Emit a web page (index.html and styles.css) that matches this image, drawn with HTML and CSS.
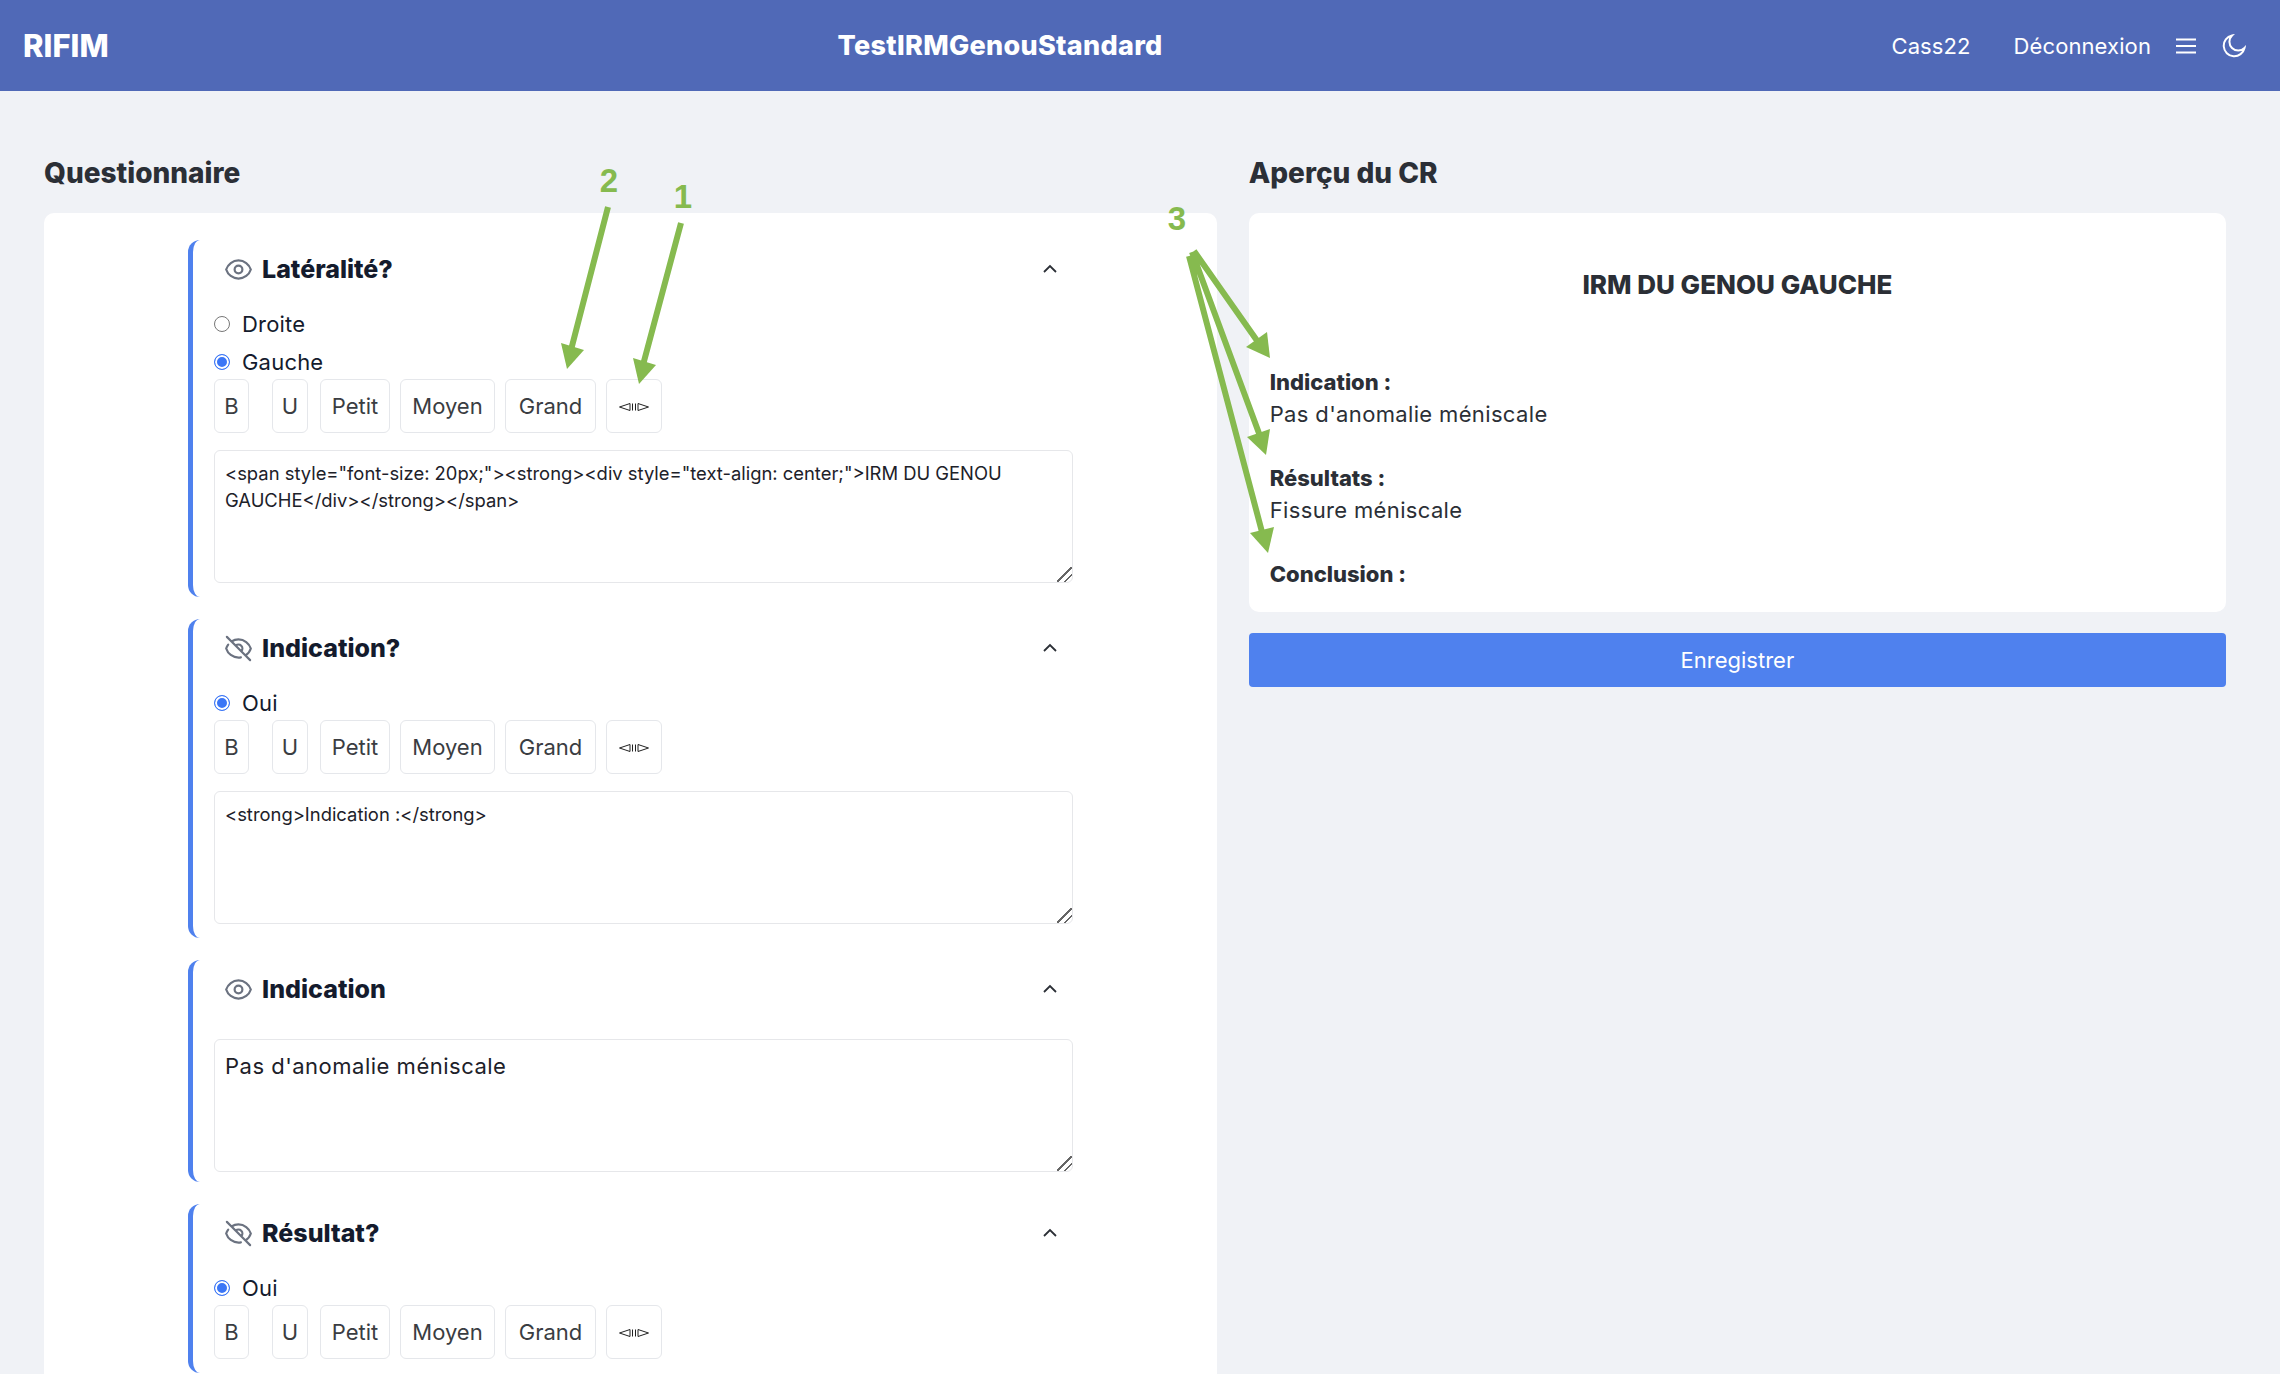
FILE: index.html
```html
<!DOCTYPE html>
<html lang="fr">
<head>
    <meta charset="UTF-8">
    <meta name="viewport" content="width=device-width, initial-scale=1.0">
    <title>TestIRMGenouStandard</title>
    <link rel="stylesheet" href="styles.css">
</head>
<body>
    <svg width="0" height="0" class="defs">
        <symbol id="eye" viewBox="0 0 24 24">
            <path d="M15 12a3 3 0 11-6 0 3 3 0 016 0z"/>
            <path d="M2.458 12C3.732 7.943 7.523 5 12 5c4.478 0 8.268 2.943 9.542 7-1.274 4.057-5.064 7-9.542 7-4.477 0-8.268-2.943-9.542-7z"/>
        </symbol>
        <symbol id="eye-off" viewBox="0 0 24 24">
            <path d="M13.875 18.825A10.05 10.05 0 0112 19c-4.478 0-8.268-2.943-9.543-7a9.97 9.97 0 011.563-3.029m5.858.908a3 3 0 114.243 4.243M9.878 9.878l4.242 4.242M9.88 9.88l-3.29-3.29m7.532 7.532l3.29 3.29M3 3l3.59 3.59m0 0A9.953 9.953 0 0112 5c4.478 0 8.268 2.943 9.543 7a10.025 10.025 0 01-4.132 5.411m0 0L21 21"/>
        </symbol>
        <symbol id="chevron" viewBox="0 0 16 10">
            <path d="M2 8l6-6 6 6"/>
        </symbol>
        <symbol id="align" viewBox="0 0 30 8">
            <path d="M0.5 4L11 0.5v7z"/>
            <path d="M13.5 0.5v7M16.5 0.5v7"/>
            <path d="M29.5 4L19 0.5v7z"/>
        </symbol>
    </svg>

    <header class="topbar">
        <div class="brand">RIFIM</div>
        <div class="page-name">TestIRMGenouStandard</div>
        <nav class="topnav">
            <a class="nav-user">Cass22</a>
            <a class="nav-logout">Déconnexion</a>
            <svg class="nav-icon nav-menu" viewBox="0 0 20 16"><path d="M0 1.5h20M0 8h20M0 14.5h20"/></svg>
            <svg class="nav-icon nav-moon" viewBox="0 0 24 24"><path d="M10 1.5A10.5 10.5 0 1 0 22.5 14 8.6 8.6 0 0 1 10 1.5z"/></svg>
        </nav>
    </header>

    <main class="layout">
        <section>
            <h2 class="section-title">Questionnaire</h2>
            <div class="card form-card">

                <div class="block">
                    <div class="block-head">
                        <svg class="eye"><use href="#eye"/></svg>
                        <h3>Latéralité?</h3>
                        <svg class="chevron"><use href="#chevron"/></svg>
                    </div>
                    <div class="radios">
                        <label class="radio"><input type="radio" name="lat">Droite</label>
                        <label class="radio"><input type="radio" name="lat" checked>Gauche</label>
                    </div>
                    <div class="toolbar">
                        <button class="tool tool-b">B</button>
                        <button class="tool tool-u">U</button>
                        <button class="tool tool-petit">Petit</button>
                        <button class="tool tool-moyen">Moyen</button>
                        <button class="tool tool-grand">Grand</button>
                        <button class="tool tool-align"><svg class="align"><use href="#align"/></svg></button>
                    </div>
                    <textarea class="code">&lt;span style="font-size: 20px;"&gt;&lt;strong&gt;&lt;div style="text-align: center;"&gt;IRM DU GENOU GAUCHE&lt;/div&gt;&lt;/strong&gt;&lt;/span&gt;</textarea>
                </div>

                <div class="block">
                    <div class="block-head">
                        <svg class="eye"><use href="#eye-off"/></svg>
                        <h3>Indication?</h3>
                        <svg class="chevron"><use href="#chevron"/></svg>
                    </div>
                    <div class="radios">
                        <label class="radio"><input type="radio" name="ind" checked>Oui</label>
                    </div>
                    <div class="toolbar">
                        <button class="tool tool-b">B</button>
                        <button class="tool tool-u">U</button>
                        <button class="tool tool-petit">Petit</button>
                        <button class="tool tool-moyen">Moyen</button>
                        <button class="tool tool-grand">Grand</button>
                        <button class="tool tool-align"><svg class="align"><use href="#align"/></svg></button>
                    </div>
                    <textarea class="code">&lt;strong&gt;Indication :&lt;/strong&gt;</textarea>
                </div>

                <div class="block block-text">
                    <div class="block-head">
                        <svg class="eye"><use href="#eye"/></svg>
                        <h3>Indication</h3>
                        <svg class="chevron"><use href="#chevron"/></svg>
                    </div>
                    <textarea class="answer">Pas d'anomalie méniscale</textarea>
                </div>

                <div class="block">
                    <div class="block-head">
                        <svg class="eye"><use href="#eye-off"/></svg>
                        <h3>Résultat?</h3>
                        <svg class="chevron"><use href="#chevron"/></svg>
                    </div>
                    <div class="radios">
                        <label class="radio"><input type="radio" name="res" checked>Oui</label>
                    </div>
                    <div class="toolbar">
                        <button class="tool tool-b">B</button>
                        <button class="tool tool-u">U</button>
                        <button class="tool tool-petit">Petit</button>
                        <button class="tool tool-moyen">Moyen</button>
                        <button class="tool tool-grand">Grand</button>
                        <button class="tool tool-align"><svg class="align"><use href="#align"/></svg></button>
                    </div>
                </div>

            </div>
        </section>

        <section>
            <h2 class="section-title">Aperçu du CR</h2>
            <div class="card preview-card">
                <h3 class="preview-title">IRM DU GENOU GAUCHE</h3>
                <p class="preview-item"><strong>Indication :</strong><br>Pas d'anomalie méniscale</p>
                <p class="preview-item"><strong>Résultats :</strong><br>Fissure méniscale</p>
                <p class="preview-item"><strong>Conclusion :</strong></p>
            </div>
            <button class="save">Enregistrer</button>
        </section>
    </main>

    <!-- green annotations drawn over the screenshot -->
    <svg class="notes" viewBox="0 0 2280 1374">
        <text x="609" y="192">2</text>
        <text x="683" y="208">1</text>
        <text x="1177" y="230">3</text>
        <path class="note-line" d="M608 207L571 350M681 223L643 365M1194 251L1258 342M1192 252L1260 436M1189 256L1262 532"/>
        <path class="note-head" d="M567 369L561 343L584 350z"/>
        <path class="note-head" d="M639 384L633 358L656 365z"/>
        <path class="note-head" d="M1270 358L1246 347L1267 332z"/>
        <path class="note-head" d="M1266 455L1247 437L1270 429z"/>
        <path class="note-head" d="M1268 553L1250 533L1274 527z"/>
    </svg>
</body>
</html>
```

FILE: styles.css
```css
* {
    box-sizing: border-box;
}
html, body {
    height: 1374px;
    overflow: hidden;
}
body {
    position: relative;
    margin: 0;
    font-family: Inter, "Noto Sans", sans-serif;
    font-size: 22px;
    background-color: #f0f2f6;
    color: #2b2f36;
}
.defs {
    position: absolute;
}

/* top bar */
.topbar {
    display: flex;
    align-items: center;
    justify-content: space-between;
    height: 91px;
    padding: 0 34px 0 23px;
    background-color: #5069b7;
    color: #fff;
}
.brand {
    font-size: 31px;
    font-weight: 800;
}
.page-name {
    font-size: 27px;
    font-weight: 800;
    letter-spacing: 0.3px;
}
.topnav {
    display: flex;
    align-items: center;
}
.nav-user, .nav-logout {
    font-size: 22px;
    letter-spacing: 0.1px;
}
.nav-logout {
    margin-left: 43px;
}
.nav-icon {
    fill: none;
    stroke: #fff;
    stroke-width: 2;
}
.nav-menu {
    width: 20px;
    height: 16px;
    margin-left: 25px;
}
.nav-moon {
    width: 24px;
    height: 24px;
    margin-left: 26px;
}

/* two columns */
.layout {
    display: grid;
    grid-template-columns: 6fr 5fr;
    gap: 32px;
    padding: 62px 54px 0 44px;
}
.section-title {
    margin: 0 0 20px;
    font-size: 28px;
    line-height: 40px;
    font-weight: 800;
}
.card {
    background-color: #fff;
    border-radius: 10px;
}
.form-card {
    height: 1400px;
    padding: 27px 0 0 144px;
}

/* question blocks */
.block {
    width: 898px;
    margin-bottom: 22px;
    padding: 0 13px 14px 21px;
    background-color: #fff;
    border-left: 5px solid #4f81ee;
    border-radius: 12px;
}
.block-text {
    padding-bottom: 10px;
}
.block-head {
    display: flex;
    align-items: center;
    height: 58px;
    padding-left: 9px;
}
.block-head h3 {
    flex: 1;
    margin: 0 0 0 8px;
    font-size: 25px;
    font-weight: 800;
    color: #141b2d;
}
.eye {
    width: 31px;
    height: 31px;
    fill: none;
    stroke: #6b7280;
    stroke-width: 1.7;
    stroke-linecap: round;
    stroke-linejoin: round;
}
.chevron {
    width: 16px;
    height: 10px;
    margin-right: 15px;
    fill: none;
    stroke: #2b2f36;
    stroke-width: 1.8;
}
.radios {
    display: flex;
    flex-direction: column;
    gap: 12px;
    margin-top: 13px;
}
.radio {
    display: flex;
    align-items: center;
    height: 26px;
    letter-spacing: 0.2px;
    color: #141b2d;
}
.radio input {
    appearance: none;
    width: 16px;
    height: 16px;
    margin: 0 12px 0 0;
    background-color: #fff;
    border: 1.5px solid #777;
    border-radius: 50%;
}
.radio input:checked {
    background-color: #3b76f6;
    border-color: #3b76f6;
    box-shadow: inset 0 0 0 2px #fff;
}

/* formatting buttons */
.toolbar {
    display: flex;
    gap: 10px;
    margin-top: 4px;
}
.tool {
    height: 54px;
    padding: 0;
    font-family: inherit;
    font-size: 22px;
    color: #3a3d42;
    background-color: #fff;
    border: 1px solid #e5e7eb;
    border-radius: 6px;
}
.tool-b {
    width: 35px;
    margin-right: 13px;
}
.tool-u {
    width: 36px;
    margin-right: 2px;
}
.tool-petit {
    width: 70px;
}
.tool-moyen {
    width: 95px;
}
.tool-grand {
    width: 91px;
}
.tool-align {
    width: 56px;
}
.align {
    display: block;
    width: 30px;
    height: 8px;
    margin: 2px auto 0;
    fill: none;
    stroke: #222;
    stroke-width: 1;
}

/* text fields */
textarea {
    display: block;
    width: 100%;
    height: 133px;
    padding: 9px 10px;
    font-family: inherit;
    color: #1d2129;
    background-color: #fff;
    border: 1.5px solid #e6e7ea;
    border-radius: 6px;
    outline: none;
}
textarea::-webkit-resizer {
    background: linear-gradient(135deg, transparent 46%, #666 46%, #666 54%, transparent 54%, transparent 71%, #666 71%, #666 79%, transparent 79%);
}
.code {
    margin-top: 17px;
    font-size: 18.4px;
    line-height: 27px;
}
.answer {
    margin-top: 21px;
    padding-top: 10px;
    font-size: 22px;
    line-height: 32px;
    letter-spacing: 0.5px;
}

/* preview */
.preview-card {
    height: 399px;
    padding: 52px 21px 0;
}
.preview-title {
    margin: 0 0 61px;
    font-size: 26px;
    line-height: 40px;
    font-weight: 800;
    text-align: center;
}
.preview-item {
    margin: 0 0 32px;
    line-height: 32px;
    letter-spacing: 0.35px;
}
.preview-item strong {
    font-weight: 800;
    letter-spacing: 0;
}
.save {
    display: block;
    width: 100%;
    height: 54px;
    margin-top: 21px;
    font-family: inherit;
    font-size: 22px;
    color: #fff;
    background-color: #4f81ee;
    border: none;
    border-radius: 4px;
}

/* annotations */
.notes {
    position: absolute;
    top: 0;
    left: 0;
    width: 2280px;
    height: 1374px;
    pointer-events: none;
}
.notes text {
    font-family: "Liberation Sans", Arial, sans-serif;
    font-size: 33px;
    font-weight: 700;
    text-anchor: middle;
    fill: #86ba4f;
}
.note-line {
    fill: none;
    stroke: #86ba4f;
    stroke-width: 6;
}
.note-head {
    fill: #86ba4f;
}
```
